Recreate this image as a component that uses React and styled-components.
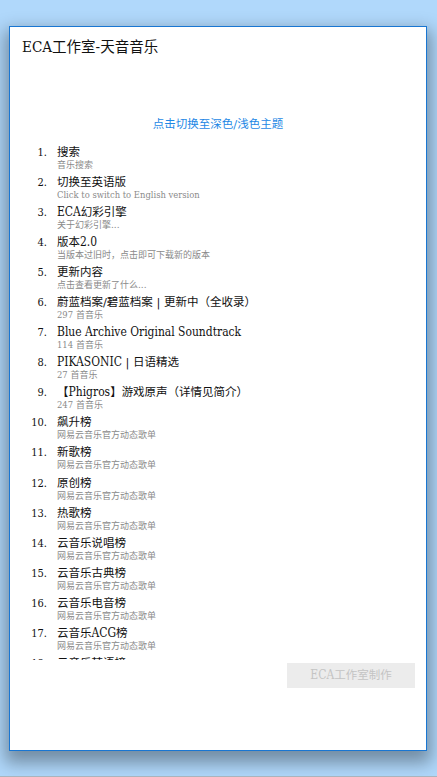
import React from 'react';
import styled, { createGlobalStyle } from 'styled-components';

const GlobalStyle = createGlobalStyle`
  html, body {
    margin: 0;
    padding: 0;
    height: 100%;
  }
  #root {
    height: 100%;
  }
`;

const Page = styled.div`
  box-sizing: border-box;
  width: 437px;
  height: 777px;
  padding: 26px 10px 26px 9px;
  background: #b0d8fb;
  border-bottom: 1px solid #a9b4bd;
  font-family: "DejaVu Serif", "Noto Sans CJK SC", serif;
  overflow: hidden;
`;

const Panel = styled.div`
  box-sizing: border-box;
  height: 725px;
  display: flex;
  flex-direction: column;
  background: #fff;
  border: 1px solid #1976d2;
  box-shadow: 0 8px 16px 4px rgba(0, 0, 0, 0.35);
`;

const Title = styled.h1`
  margin: 0;
  padding: 11px 12px 0;
  height: 89px;
  box-sizing: border-box;
  font-size: 14.5px;
  font-weight: 400;
  line-height: 18px;
  color: #111;
`;

const ThemeToggle = styled.div`
  height: 17px;
  font-size: 11.5px;
  line-height: 17px;
  text-align: center;
  color: #1e88e5;
`;

const List = styled.ol`
  flex: none;
  height: 527px;
  margin: 0;
  padding: 12px 0 0 0;
  box-sizing: border-box;
  overflow: hidden;
  list-style: none;
`;

const Item = styled.li`
  display: grid;
  grid-template-columns: 37px 1fr;
  column-gap: 10px;
  height: 30.05px;
  font-size: 11.5px;
  color: #111;
`;

const Index = styled.span`
  font-size: 11px;
  font-stretch: condensed;
  line-height: 15px;
  text-align: right;
`;

const ItemName = styled.div`
  line-height: 15px;
  white-space: nowrap;
`;

const Latin = styled.span`
  font-size: 1.04em;
  font-stretch: condensed;
`;

const ItemDesc = styled.div`
  font-size: 9px;
  line-height: 10px;
  color: #8a8a8a;
  white-space: nowrap;
`;

const Footer = styled.div`
  display: flex;
  justify-content: flex-end;
  padding: 3px 11px 0 0;
`;

const MadeBy = styled.div`
  width: 128px;
  height: 25px;
  background: #ececec;
  color: #c4c4c4;
  font-size: 11.5px;
  line-height: 25px;
  text-align: center;
`;

const official = '网易云音乐官方动态歌单';

const items = [
  ['搜索', '音乐搜索'],
  ['切换至英语版', <Latin>Click to switch to English version</Latin>],
  [<><Latin>ECA</Latin>幻彩引擎</>, '关于幻彩引擎...'],
  [<>版本<Latin>2.0</Latin></>, '当版本过旧时\uFF0C点击即可下载新的版本'],
  ['更新内容', '点击查看更新了什么...'],
  ['蔚蓝档案/碧蓝档案 | 更新中\uFF08全收录\uFF09', <><Latin>297</Latin> 首音乐</>],
  [<Latin>Blue Archive Original Soundtrack</Latin>, <><Latin>114</Latin> 首音乐</>],
  [<><Latin>PIKASONIC</Latin> | 日语精选</>, <><Latin>27</Latin> 首音乐</>],
  [<>【<Latin>Phigros</Latin>】{'游戏原声\uFF08详情见简介\uFF09'}</>, <><Latin>247</Latin> 首音乐</>],
  ['飙升榜', official],
  ['新歌榜', official],
  ['原创榜', official],
  ['热歌榜', official],
  ['云音乐说唱榜', official],
  ['云音乐古典榜', official],
  ['云音乐电音榜', official],
  [<>云音乐<Latin>ACG</Latin>榜</>, official],
  ['云音乐韩语榜', official],
];

const App = () => (
  <Page>
    <GlobalStyle />
    <Panel>
      <Title><Latin>ECA</Latin>工作室<Latin>-</Latin>天音音乐</Title>
      <ThemeToggle>点击切换至深色/浅色主题</ThemeToggle>
      <List>
        {items.map(([name, desc], i) => (
          <Item key={i}>
            <Index>{i + 1}.</Index>
            <div>
              <ItemName>{name}</ItemName>
              <ItemDesc>{desc}</ItemDesc>
            </div>
          </Item>
        ))}
      </List>
      <Footer>
        <MadeBy><Latin>ECA</Latin>工作室制作</MadeBy>
      </Footer>
    </Panel>
  </Page>
);

export default App;
